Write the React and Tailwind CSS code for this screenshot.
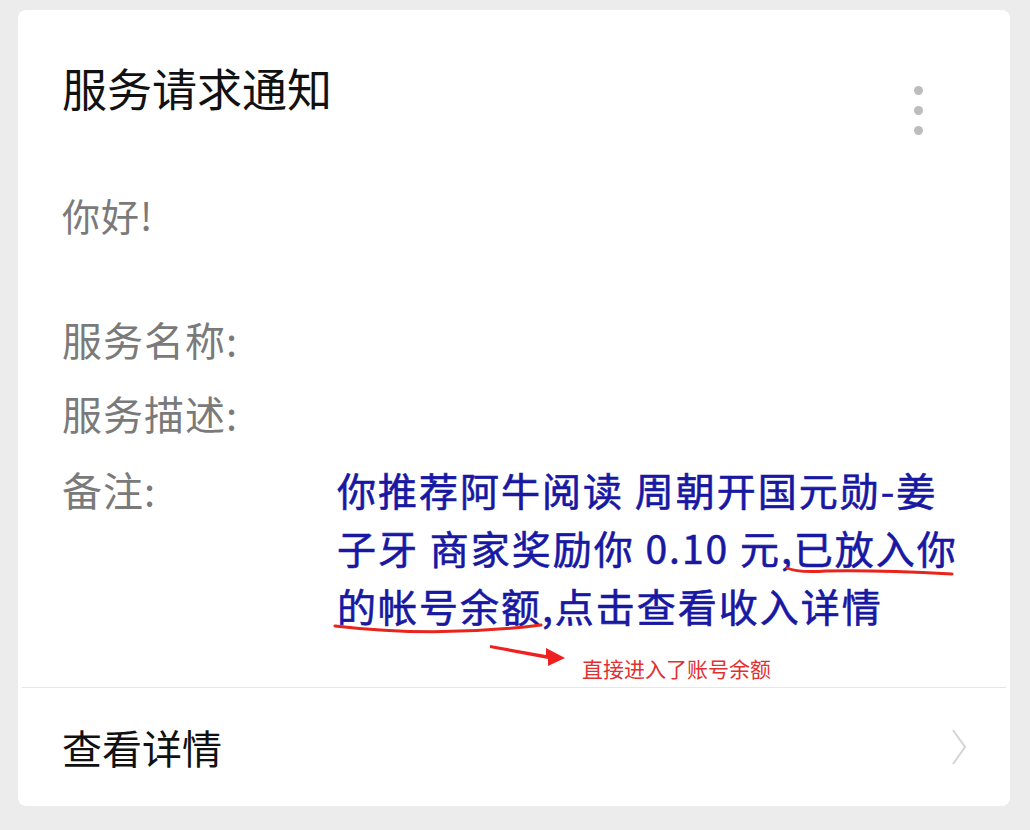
import React from 'react';

const cjk = 'font-["Noto_Sans_CJK_SC","Noto_Sans",sans-serif]';

const MoreDots = () => (
  <div className="flex flex-col gap-[11px] pt-[28px] pr-[87px]">
    <span className="block w-[9px] h-[9px] rounded-full bg-[#bdbdbd]" />
    <span className="block w-[9px] h-[9px] rounded-full bg-[#bdbdbd]" />
    <span className="block w-[9px] h-[9px] rounded-full bg-[#bdbdbd]" />
  </div>
);

const Remark = () => (
  <div className="relative text-[39px] leading-[58px] font-normal text-[#1818a2] tracking-[2px] [-webkit-text-stroke:0.6px_#1818a2] whitespace-nowrap">
    <div>你推荐阿牛阅读 周朝开国元勋-姜</div>
    <div>子牙 商家奖励你 0.10 元,已放入你</div>
    <div>的帐号余额,点击查看收入详情</div>
    {/* hand-drawn marks on the screenshot */}
    <svg className="absolute left-0 top-0 overflow-visible pointer-events-none" width="620" height="230">
      <path d="M450 108 Q461 113 489 111 Q540 110 615 114" stroke="#e8241c" strokeWidth="3" fill="none" strokeLinecap="round" />
      <path d="M-2 166 Q100 178 204 165" stroke="#e8241c" strokeWidth="3" fill="none" strokeLinecap="round" />
      <polygon points="153,185 209,195 209,188 228,198 211,206 211,199 153,188" fill="#ef2020" />
    </svg>
  </div>
);

export default function App() {
  return (
    <div className={`min-h-[830px] bg-[#ececec] pt-[10px] pl-[18px] pr-[20px] pb-[24px] ${cjk}`}>
      <div className="bg-white rounded-[8px] overflow-hidden">
        {/* header */}
        <div className="flex justify-between items-start pl-[44px] pt-[48px]">
          <h1 className="text-[45px] leading-[60px] text-[#111] font-normal">服务请求通知</h1>
          <MoreDots />
        </div>

        {/* body */}
        <div className="pl-[44px] text-[#7a7a7a]">
          <p className="mt-[50px] text-[38px] leading-[60px] tracking-[1px]">你好!</p>

          <div className="mt-[57px] text-[40px] leading-[74px] tracking-[1px]">
            <div>服务名称:</div>
            <div>服务描述:</div>
          </div>

          <div className="flex mt-[10px]">
            <div className="w-[275px] text-[40px] leading-[58px] tracking-[1px]">备注:</div>
            <Remark />
          </div>

          <div className="pl-[520px] pt-[19px] h-[53px] text-[21px] leading-[30px] text-[#e23030]">
            直接进入了账号余额
          </div>
        </div>

        <div className="mx-[4px] h-px bg-[#e6e6e6]" />

        {/* footer link */}
        <div className="flex items-center justify-between h-[118px] pl-[44px] pr-[42px]">
          <span className="text-[40px] leading-[60px] text-[#111]">查看详情</span>
          <svg width="18" height="38" viewBox="0 0 18 38" fill="none">
            <path d="M3 2 L15 19 L3 36" stroke="#d4d4d4" strokeWidth="2" />
          </svg>
        </div>
      </div>
    </div>
  );
}
